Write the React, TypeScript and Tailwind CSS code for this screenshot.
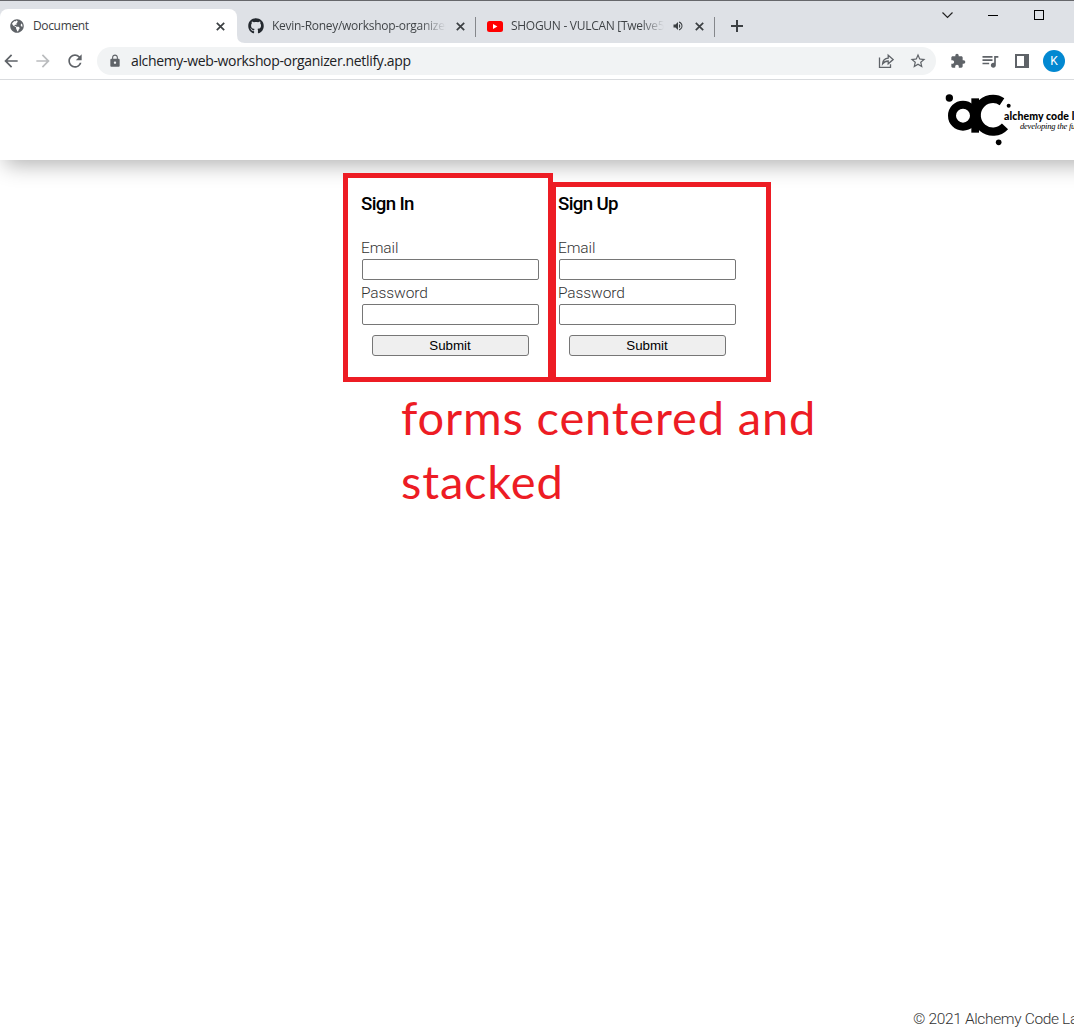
import type { ReactNode } from 'react';
import {
  MdArrowBack,
  MdArrowForward,
  MdExtension,
  MdLock,
  MdQueueMusic,
  MdRefresh,
  MdStarOutline,
  MdVolumeUp,
} from 'react-icons/md';
import { FaGithub, FaGlobeAmericas } from 'react-icons/fa';

function CloseIcon({ className }: { className: string }) {
  return (
    <svg className={`size-[9px] shrink-0 ${className}`} viewBox="0 0 9 9">
      <path d="M.8.8l7.400 7.400M8.200.8L.8 8.200" stroke="#3c4043" strokeWidth="1.7" />
    </svg>
  );
}

function TabStrip() {
  return (
    <div className="flex h-[43px] items-end border-t border-[#66676b] bg-[#dee1e6] font-['Open_Sans',sans-serif] text-[12px] text-[#3c4043]">
      <div className="relative flex h-[34px] w-[237px] shrink-0 items-center rounded-t-lg bg-white pl-[10px]">
        <FaGlobeAmericas className="size-[14px] shrink-0 text-[#5f6368]" />
        <span className="ml-[9px] w-[183px] tracking-[-0.35px]">Document</span>
        <CloseIcon className="" />
        <svg className="absolute bottom-0 -right-2 size-2" viewBox="0 0 8 8">
          <path d="M0 0 Q0 8 8 8 H0Z" fill="#fff" />
        </svg>
      </div>
      <div className="flex h-[34px] w-[239px] shrink-0 items-center pl-[11px]">
        <FaGithub className="size-4 shrink-0 text-[#24292f]" />
        <span className="ml-2 w-[174px] overflow-hidden whitespace-nowrap bg-gradient-to-r from-[#3c4043] from-85% to-transparent bg-clip-text tracking-[-0.28px] text-transparent">
          Kevin-Roney/workshop-organizer
        </span>
        <CloseIcon className="ml-[10px]" />
      </div>
      <div className="mb-[6px] -ml-px h-5 w-px bg-[#85878b]" />
      <div className="flex h-[34px] w-[238px] shrink-0 items-center pl-[11px]">
        <svg className="h-[11px] w-4 shrink-0" viewBox="0 0 16 11">
          <rect width="16" height="11" rx="2.5" fill="#f00" />
          <path d="M6 3v5l4.4-2.5z" fill="#fff" />
        </svg>
        <span className="ml-2 w-[153px] overflow-hidden whitespace-nowrap bg-gradient-to-r from-[#3c4043] from-85% to-transparent bg-clip-text tracking-[-0.28px] text-transparent">
          SHOGUN - VULCAN [Twelve50
        </span>
        <MdVolumeUp className="ml-[8px] size-3 shrink-0" />
        <CloseIcon className="ml-[11px]" />
      </div>
      <div className="mb-[6px] h-5 w-px bg-[#85878b]" />
      <svg className="mb-[11px] ml-4 size-3" viewBox="0 0 12 12">
        <path d="M6 0v12M0 6h12" stroke="#3c4043" strokeWidth="2" />
      </svg>
      <div className="ml-auto flex h-[42px] items-start pr-[30px] pt-[8px]">
        <svg className="mt-px h-[10px] w-[13px]" viewBox="0 0 13 10">
          <path d="M1.5 2.5l5 5 5-5" fill="none" stroke="#222" strokeWidth="1.2" />
        </svg>
        <svg className="ml-[34px] mt-[1px] h-[10px] w-[10px]" viewBox="0 0 10 10">
          <path d="M0 5.5h10" stroke="#000" />
        </svg>
        <svg className="ml-[36px] mt-[1px] size-[10px]" viewBox="0 0 10 10">
          <rect x=".5" y=".5" width="9" height="9" fill="none" stroke="#000" />
        </svg>
      </div>
    </div>
  );
}

function Toolbar() {
  return (
    <div className="flex h-[37px] items-center border-b border-[#d9dbde] bg-white text-[#5f6368]">
      <MdArrowBack className="ml-px size-5 shrink-0" />
      <MdArrowForward className="ml-3 size-5 shrink-0 text-[#babcbe]" />
      <MdRefresh className="ml-3 size-5 shrink-0" />
      <div className="ml-3 flex h-7 w-[839px] shrink-0 items-center rounded-full bg-[#f1f3f4] pl-[11px]">
        <MdLock className="size-[14px] shrink-0" />
        <span className="mb-px ml-[9px] font-['Open_Sans',sans-serif] text-[14px] tracking-[-0.345px] text-[#202124]">
          alchemy-web-workshop-organizer.netlify.app
        </span>
        <svg className="ml-auto size-4" viewBox="0 0 16 16" fill="none" stroke="#5f6368" strokeWidth="1.3">
          <path d="M1.5 4.5v9.8h11v-3M4.6 10.8c.3-3.5 2.2-5.4 5.6-5.6V2.3l4.9 4.3-4.9 4.2V8c-2.500 0-4.200.9-5.600 2.800z" />
        </svg>
        <MdStarOutline className="ml-[15px] mr-[9px] size-[18px]" />
      </div>
      <MdExtension className="ml-[14px] size-4 shrink-0" />
      <MdQueueMusic className="ml-[14px] size-5 shrink-0" />
      <svg className="ml-[15px] size-[14px] shrink-0" viewBox="0 0 14 14">
        <path d="M0 0h14v14H0zM2 2v10h7V2z" fill="#5f6368" fillRule="evenodd" />
      </svg>
      <div className="ml-[14px] flex size-[22px] shrink-0 items-center justify-center rounded-full bg-[#0288d1] font-['Roboto',sans-serif] text-[12px] text-white">
        K
      </div>
    </div>
  );
}

function SiteHeader() {
  return (
    <header className="flex h-20 items-start overflow-hidden bg-white pl-[944px] pt-[13px] text-black">
      <svg className="h-[54px] w-[67px] shrink-0" viewBox="42 27 201 162">
        <circle cx="58" cy="42" r="11" />
        <circle cx="236" cy="65" r="6" />
        <circle cx="206" cy="175" r="8.500" />
        <circle cx="99" cy="95" r="33" fill="none" stroke="#000" strokeWidth="24" />
        <path d="M124 43h23v103h-23z" />
        <path d="M216 53A49 49 0 1 0 225 127" fill="none" stroke="#000" strokeWidth="25" />
      </svg>
      <div className="-ml-[7px] mt-[16px] shrink-0 whitespace-nowrap">
        <div className="font-['Lato',sans-serif] text-[10.500px] font-black leading-[14px] tracking-[0.1px]">
          alchemy code lab
        </div>
        <div className="-mt-[3px] ml-4 font-['Liberation_Serif',serif] text-[8.500px] italic leading-[12px] tracking-[-0.2px]">
          developing the future
        </div>
      </div>
    </header>
  );
}

function CredentialsForm({ title }: { title: string }) {
  return (
    <form className="flex w-[178px] flex-col font-['Roboto',sans-serif] font-light text-[#333]">
      <h3 className="h-[47px] text-[18.700px] font-medium leading-7 tracking-[-0.65px] text-black">
        {title}
      </h3>
      <Field label="Email" type="email" />
      <Field label="Password" type="password" />
      <button
        type="button"
        className="ml-[11px] mt-[8px] h-[21px] w-[157px] rounded-[3px] border border-[#767676] bg-[#efefef] pr-px font-['Liberation_Sans',sans-serif] text-[13.333px] font-normal leading-[19px] text-black"
      >
        Submit
      </button>
    </form>
  );
}

function Field({ label, type }: { label: string; type: string }) {
  return (
    <label className="flex h-[45px] flex-col pt-px">
      <span className="h-[21px] text-[15.500px] leading-[20px] tracking-[-0.1px]">{label}</span>
      <input type={type} className="ml-px h-[21px] w-[177px] rounded-[2px] border border-[#767676] bg-white" />
    </label>
  );
}

function Outline({ children, className }: { children: ReactNode; className: string }) {
  return <div className={`border-[5px] border-[#ed1c24] ${className}`}>{children}</div>;
}

export default function App() {
  return (
    <div className="flex h-[1027px] w-[1074px] flex-col overflow-hidden bg-white">
      <div className="relative z-20">
        <TabStrip />
        <Toolbar />
      </div>
      <div className="z-10 -mr-5 shadow-[5px_5px_20px_rgba(0,0,0,0.3)]">
        <SiteHeader />
      </div>
      <main className="flex flex-1 flex-col">
        <div className="relative z-20 ml-[343px] mt-[13px] flex h-[209px] items-end">
          <Outline className="h-[209px] w-[210px] bg-white pl-[13px] pt-[12px]">
            <CredentialsForm title="Sign In" />
          </Outline>
          <Outline className="-ml-[2px] h-[200px] w-[220px] bg-white pl-[2px] pt-[3px]">
            <CredentialsForm title="Sign Up" />
          </Outline>
        </div>
        <p className="ml-[401px] mt-[3px] w-[460px] whitespace-nowrap font-['Lato',sans-serif] text-[47px] leading-[64px] tracking-[0.84px] text-[#ed1c24]">
          forms centered and
          <br />
          stacked
        </p>
      </main>
      <footer className="ml-[913px] h-[18px] whitespace-nowrap font-['Roboto',sans-serif] text-[15.500px] font-light leading-5 tracking-[-0.35px] text-[#333]">
        © 2021 Alchemy Code Lab
      </footer>
    </div>
  );
}
